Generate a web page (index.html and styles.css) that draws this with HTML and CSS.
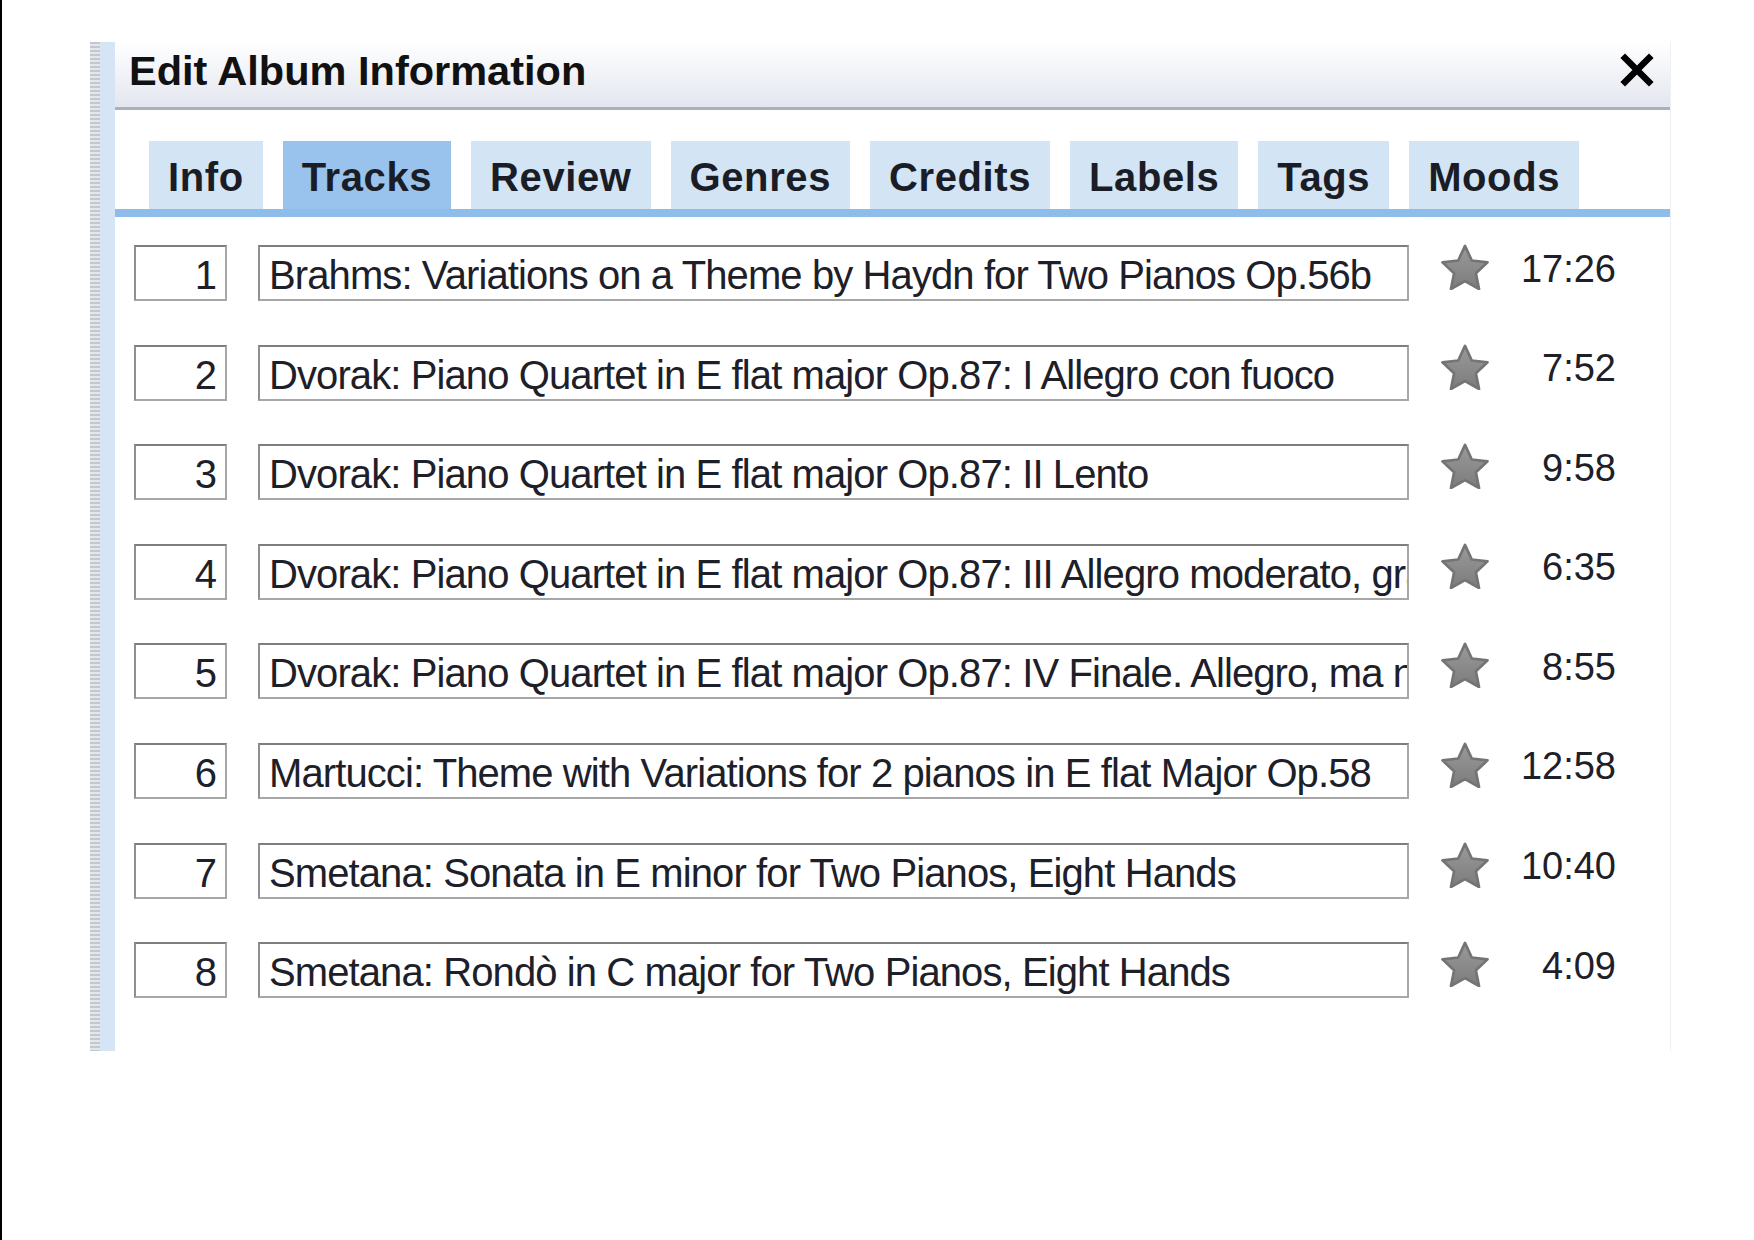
FILE: index.html
```
<!DOCTYPE html>
<html lang="en">
<head>
    <meta charset="UTF-8">
    <title>Edit Album Information</title>
    <link rel="stylesheet" href="styles.css">
</head>
<body>
    <div class="page">
        <div class="dialog">
            <div class="strip"></div>
            <div class="main">
                <div class="header">
                    <span class="title">Edit Album Information</span>
                    <svg class="close" viewBox="0 0 34 34" width="34" height="34">
                        <path d="M5 5 L29 29 M29 5 L5 29" stroke="#000" stroke-width="6.5" stroke-linecap="square" fill="none"/>
                    </svg>
                </div>

                <div class="tabs">
                    <div class="tab">Info</div>
                    <div class="tab active">Tracks</div>
                    <div class="tab">Review</div>
                    <div class="tab">Genres</div>
                    <div class="tab">Credits</div>
                    <div class="tab">Labels</div>
                    <div class="tab">Tags</div>
                    <div class="tab">Moods</div>
                </div>

                <div class="tracks" id="tracks"></div>
            </div>
        </div>
    </div>

    <script>
        const tracks = [
            { no: 1, title: 'Brahms: Variations on a Theme by Haydn for Two Pianos Op.56b', time: '17:26' },
            { no: 2, title: 'Dvorak: Piano Quartet in E flat major Op.87: I Allegro con fuoco', time: '7:52' },
            { no: 3, title: 'Dvorak: Piano Quartet in E flat major Op.87: II Lento', time: '9:58' },
            { no: 4, title: 'Dvorak: Piano Quartet in E flat major Op.87: III Allegro moderato, grazioso', time: '6:35' },
            { no: 5, title: 'Dvorak: Piano Quartet in E flat major Op.87: IV Finale. Allegro, ma non troppo', time: '8:55' },
            { no: 6, title: 'Martucci: Theme with Variations for 2 pianos in E flat Major Op.58', time: '12:58' },
            { no: 7, title: 'Smetana: Sonata in E minor for Two Pianos, Eight Hands', time: '10:40' },
            { no: 8, title: 'Smetana: Rondò in C major for Two Pianos, Eight Hands', time: '4:09' }
        ];

        const starSvg = '<svg viewBox="2 2 20 19" width="50" height="46">' +
            '<defs><linearGradient id="sg" x1="0" y1="0" x2="0" y2="1">' +
            '<stop offset="0" stop-color="#9a9a9a"/><stop offset="1" stop-color="#7c7c7c"/></linearGradient></defs>' +
            '<path d="M12 2.8l2.8 6 6.5.8-4.8 4.5 1.3 6.5L12 17.3l-5.8 3.3 1.3-6.5-4.8-4.5 6.5-.8z" ' +
            'fill="url(#sg)" stroke="#747474" stroke-width="1.1" stroke-linejoin="round"/></svg>';

        const list = document.getElementById('tracks');
        tracks.forEach(t => {
            const row = document.createElement('div');
            row.className = 'track';

            const no = document.createElement('div');
            no.className = 'box num';
            no.textContent = t.no;

            // the title box clips long names, like a text input does
            const title = document.createElement('div');
            title.className = 'box field';
            const text = document.createElement('span');
            text.className = 'field-text';
            text.textContent = t.title;
            title.appendChild(text);

            const star = document.createElement('div');
            star.className = 'star';
            star.innerHTML = starSvg;

            const time = document.createElement('div');
            time.className = 'time';
            time.textContent = t.time;

            row.appendChild(no);
            row.appendChild(title);
            row.appendChild(star);
            row.appendChild(time);
            list.appendChild(row);
        });
    </script>
</body>
</html>
```

FILE: styles.css
```
body {
    margin: 0;
    background: #fff;
    font-family: "Liberation Sans", Arial, sans-serif;
    color: #1d2029;
}
.page {
    min-height: 1240px;
    box-sizing: border-box;
    border-left: 2px solid #000;
    padding: 42px 0 0 88px;
}
.dialog {
    display: flex;
    width: 1581px;
}
.strip {
    width: 25px;
    flex: none;
    background:
        repeating-linear-gradient(to bottom, #c3c8cf 0, #c3c8cf 2px, #e3e7ec 2px, #e3e7ec 4px) left top / 10px 100% no-repeat,
        #d6e5f5;
}
.main {
    flex: 1;
    background: #fff;
    border-right: 1px solid #edf1f6;
    padding-bottom: 53px;
}
.header {
    height: 65px;
    display: flex;
    align-items: center;
    justify-content: space-between;
    padding: 0 16px 0 14px;
    background: linear-gradient(to bottom, #ffffff, #e3e6ef);
    border-bottom: 3px solid #acb0b8;
}
.title {
    font-size: 41.5px;
    font-weight: bold;
    color: #111;
    margin-top: -7px;
}
.close {
    margin-top: -9px;
}
.tabs {
    display: flex;
    gap: 20px;
    padding: 31px 0 0 34px;
    border-bottom: 8px solid #8fbde9;
}
.tab {
    height: 68px;
    line-height: 72px;
    padding: 0 19px;
    background: #d3e4f5;
    font-size: 40px;
    font-weight: bold;
    letter-spacing: 0.6px;
    color: #1a1d26;
}
.tab.active {
    background: #99c3ed;
}
.tracks {
    display: flex;
    flex-direction: column;
    gap: 43.6px;
    padding: 28px 0 0 19px;
}
.track {
    display: flex;
    align-items: center;
    height: 56px;
}
.box {
    box-sizing: border-box;
    height: 56px;
    line-height: 52px;
    border: 2px solid #a7a7a7;
    border-top-color: #7e7e7e;
    border-left-color: #8f8f8f;
    background: #fff;
    font-size: 40px;
    letter-spacing: -0.9px;
    white-space: nowrap;
    overflow: hidden;
}
.num {
    width: 93px;
    text-align: right;
    padding-right: 9px;
    padding-top: 2px;
}
.field {
    width: 1151px;
    margin-left: 31px;
    padding: 2px 0 0 9px;
}
.field-text {
    display: block;
    overflow: hidden;
}
.star {
    width: 50px;
    height: 46px;
    margin: -12px 0 0 31px;
}
.star svg {
    display: block;
}
.time {
    width: 126px;
    text-align: right;
    font-size: 38px;
    margin-top: -8px;
}
```
